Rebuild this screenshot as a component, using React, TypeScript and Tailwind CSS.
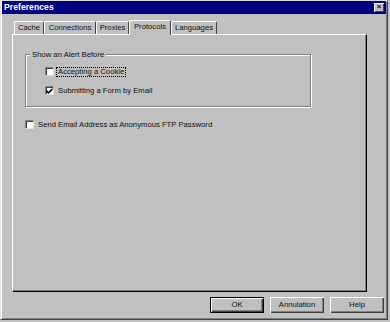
import React from "react";

const tabs = [
  { label: "Cache", w: "w-[30px]", sel: false },
  { label: "Connections", w: "w-[52px]", sel: false },
  { label: "Proxies", w: "w-[33px]", sel: false },
  { label: "Protocols", w: "w-[42px]", sel: true },
  { label: "Languages", w: "w-[46px]", sel: false },
];

function Check({ checked }: { checked?: boolean }) {
  return (
    <div className="w-[9px] h-[9px] shrink-0 bg-white border border-t-[#808080] border-l-[#808080] border-r-[#dfdfdf] border-b-[#dfdfdf] shadow-[inset_1px_1px_0_#404040] flex items-center justify-center">
      {checked && (
        <svg width="7" height="7" viewBox="0 0 7 7">
          <path d="M0.5 2.8 L2.5 4.8 L6.5 0.8 L6.5 3 L2.5 7 L0.5 5 Z" fill="black" />
        </svg>
      )}
    </div>
  );
}

function Row({ label, checked, focus }: { label: string; checked?: boolean; focus?: boolean }) {
  return (
    <div className="flex items-center h-[11px]">
      <Check checked={checked} />
      <span
        className={
          focus
            ? "ml-[2px] px-px leading-[8px] border border-dotted border-black whitespace-nowrap"
            : "ml-[2px] px-px leading-[8px] border border-transparent whitespace-nowrap"
        }
      >
        {label}
      </span>
    </div>
  );
}

function Btn({ label, def }: { label: string; def?: boolean }) {
  return (
    <div
      className={
        def
          ? "h-[16px] w-[54px] flex items-center justify-center border border-black bg-[#c0c0c0] shadow-[inset_1px_1px_0_white,inset_-1px_-1px_0_#404040,inset_-2px_-2px_0_#808080]"
          : "h-[16px] w-[54px] flex items-center justify-center bg-[#c0c0c0] shadow-[inset_1px_1px_0_white,inset_-1px_-1px_0_#404040,inset_-2px_-2px_0_#808080]"
      }
    >
      {label}
    </div>
  );
}

export default function App() {
  return (
    <div className="w-[390px] h-[322px] bg-[#c0c0c0] font-['Liberation_Sans',Arial,sans-serif] text-[7.7px] text-[#111]">
      <div className="w-[388px] h-[320px] border border-t-[#dfdfdf] border-l-[#dfdfdf] border-r-[#404040] border-b-[#404040] shadow-[inset_1px_1px_0_white,inset_-1px_-1px_0_#808080] px-px flex flex-col">
        {/* title bar */}
        <div className="h-[13px] bg-[#000080] flex items-center justify-between pl-[2px] pr-[2px]">
          <span className="text-white font-bold text-[8.7px] leading-none">Preferences</span>
          <div className="w-[10px] h-[9px] bg-[#c0c0c0] shadow-[inset_1px_1px_0_white,inset_-1px_-1px_0_#404040] flex items-center justify-center">
            <span className="text-[8px] font-bold leading-none -mt-px">×</span>
          </div>
        </div>

        {/* tabs */}
        <div className="mt-[5px] ml-[12px] h-[15px] flex items-end">
          {tabs.map((t) => (
            <div
              key={t.label}
              className={
                t.sel
                  ? `${t.w} h-[15px] relative z-10 -mb-px pb-[2px] bg-[#c0c0c0] border-t border-l border-r border-t-white border-l-white border-r-[#404040] rounded-t-[2px] flex items-center justify-center leading-none`
                  : `${t.w} h-[13px] border-t border-l border-r border-t-white border-l-white border-r-[#404040] rounded-t-[2px] flex items-center justify-center leading-none`
              }
            >
              {t.label}
            </div>
          ))}
        </div>

        {/* panel */}
        <div className="ml-[10px] w-[355px] h-[258px] border border-t-white border-l-white border-r-black border-b-black shadow-[inset_-1px_-1px_0_#808080] flex flex-col">
          <div className="relative mt-[19px] ml-[12px] w-[286px] h-[53px] border border-[#808080] shadow-[inset_1px_1px_0_white,1px_1px_0_white] pt-[11px] pl-[19px] flex flex-col gap-[8px]">
            <span className="absolute -top-[6px] left-[4px] px-[2px] bg-[#c0c0c0] leading-[11px] whitespace-nowrap">
              Show an Alert Before
            </span>
            <Row label="Accepting a Cookie" focus />
            <Row label="Submitting a Form by Email" checked />
          </div>
          <div className="mt-[12px] ml-[12px]">
            <Row label="Send Email Address as Anonymous FTP Password" />
          </div>
        </div>

        {/* buttons */}
        <div className="mt-[5px] ml-[208px] flex gap-[6px]">
          <Btn label="OK" def />
          <Btn label="Annulation" />
          <Btn label="Help" />
        </div>
      </div>
    </div>
  );
}
